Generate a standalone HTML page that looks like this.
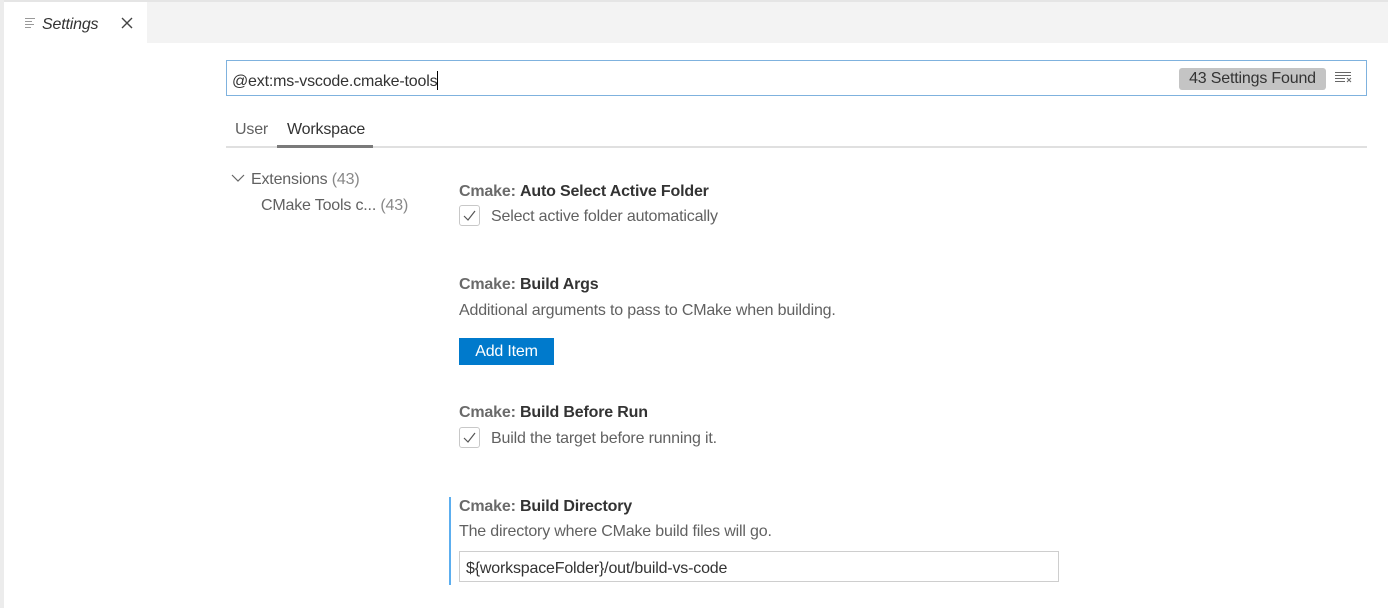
<!DOCTYPE html>
<html><head><style>
*{margin:0;padding:0;box-sizing:border-box}
body{width:1388px;height:608px;background:#fff;font-family:"Liberation Sans",sans-serif;color:#616161;position:relative;overflow:hidden}
.a{position:absolute}
.t{font-size:16px;white-space:nowrap;letter-spacing:-0.18px;margin-top:2px}
.b{color:#333;font-weight:bold}
.cb{width:21px;height:21px;border:1px solid #c8c8c8;border-radius:3px;background:#fff}
</style></head><body>
<div class="a" style="left:0;top:0;width:1388px;height:2px;background:#e5e5e5"></div>
<div class="a" style="left:0;top:0;width:4px;height:608px;background:#ececec"></div>
<div class="a" style="left:147px;top:2px;width:1241px;height:41px;background:#f3f3f3"></div>
<svg class="a" style="left:24px;top:16px" width="12" height="14"><g stroke="#999" stroke-width="1"><line x1="1" y1="2.5" x2="11" y2="2.5"/><line x1="1" y1="5.5" x2="8" y2="5.5"/><line x1="1" y1="8.5" x2="10" y2="8.5"/><line x1="1" y1="11.5" x2="7" y2="11.5"/></g></svg>
<div class="a t" style="left:42px;top:14px;font-style:italic;color:#333">Settings</div>
<svg class="a" style="left:120px;top:16px" width="14" height="14"><path d="M2 2L12 12M12 2L2 12" stroke="#444" stroke-width="1.4"/></svg>
<div class="a" style="left:226px;top:60px;width:1141px;height:36px;border:1px solid #7fb2de"></div>
<div class="a t" style="left:232px;top:69px;color:#333">@ext:ms-vscode.cmake-tools<span style="display:inline-block;width:1px;height:19px;background:#000;vertical-align:-4px"></span></div>
<div class="a t" style="left:1179px;top:66px;width:147px;height:22px;background:#c4c4c4;border-radius:3px;color:#333;text-align:center;line-height:22px">43 Settings Found</div>
<svg class="a" style="left:1334px;top:70px" width="18" height="14"><g stroke="#666" stroke-width="1"><line x1="1" y1="2.5" x2="17" y2="2.5"/><line x1="1" y1="5.5" x2="17" y2="5.5"/><line x1="1" y1="8.5" x2="11" y2="8.5"/><line x1="1" y1="11.5" x2="11" y2="11.5"/><path d="M13 8L17 12M17 8L13 12"/></g></svg>
<div class="a t" style="left:235px;top:119px">User</div>
<div class="a t" style="left:287px;top:119px;color:#333">Workspace</div>
<div class="a" style="left:226px;top:146px;width:1141px;height:2px;background:#e0e0e0"></div>
<div class="a" style="left:277px;top:145px;width:96px;height:3px;background:#7a7a7a"></div>
<svg class="a" style="left:231px;top:172px" width="14" height="12"><path d="M1 3L7 9L13 3" fill="none" stroke="#666" stroke-width="1.2"/></svg>
<div class="a t" style="left:251px;top:169px">Extensions <span style="color:#888">(43)</span></div>
<div class="a t" style="left:261px;top:195px">CMake Tools c... <span style="color:#888">(43)</span></div>

<div class="a t" style="left:459px;top:181px"><span style="font-weight:bold;color:#6a6a6a">Cmake:</span> <span class="b">Auto Select Active Folder</span></div>
<div class="a cb" style="left:459px;top:205px"></div>
<svg class="a" style="left:459px;top:205px" width="21" height="21"><path d="M5 11L9 15L16 6" fill="none" stroke="#555" stroke-width="1.2"/></svg>
<div class="a t" style="left:491px;top:206px">Select active folder automatically</div>

<div class="a t" style="left:459px;top:274px"><span style="font-weight:bold;color:#6a6a6a">Cmake:</span> <span class="b">Build Args</span></div>
<div class="a t" style="left:459px;top:300px">Additional arguments to pass to CMake when building.</div>
<div class="a t" style="left:459px;top:336px;width:95px;height:27px;background:#007acc;color:#fff;text-align:center;line-height:27px">Add Item</div>

<div class="a t" style="left:459px;top:402px"><span style="font-weight:bold;color:#6a6a6a">Cmake:</span> <span class="b">Build Before Run</span></div>
<div class="a cb" style="left:459px;top:427px"></div>
<svg class="a" style="left:459px;top:427px" width="21" height="21"><path d="M5 11L9 15L16 6" fill="none" stroke="#555" stroke-width="1.2"/></svg>
<div class="a t" style="left:491px;top:428px">Build the target before running it.</div>

<div class="a" style="left:449px;top:497px;width:2px;height:88px;background:#5caeef"></div>
<div class="a t" style="left:459px;top:496px"><span style="font-weight:bold;color:#6a6a6a">Cmake:</span> <span class="b">Build Directory</span></div>
<div class="a t" style="left:459px;top:521px">The directory where CMake build files will go.</div>
<div class="a" style="left:459px;top:551px;width:600px;height:31px;border:1px solid #cecece"></div>
<div class="a t" style="left:466px;top:558px;color:#333">${workspaceFolder}/out/build-vs-code</div>
</body></html>
